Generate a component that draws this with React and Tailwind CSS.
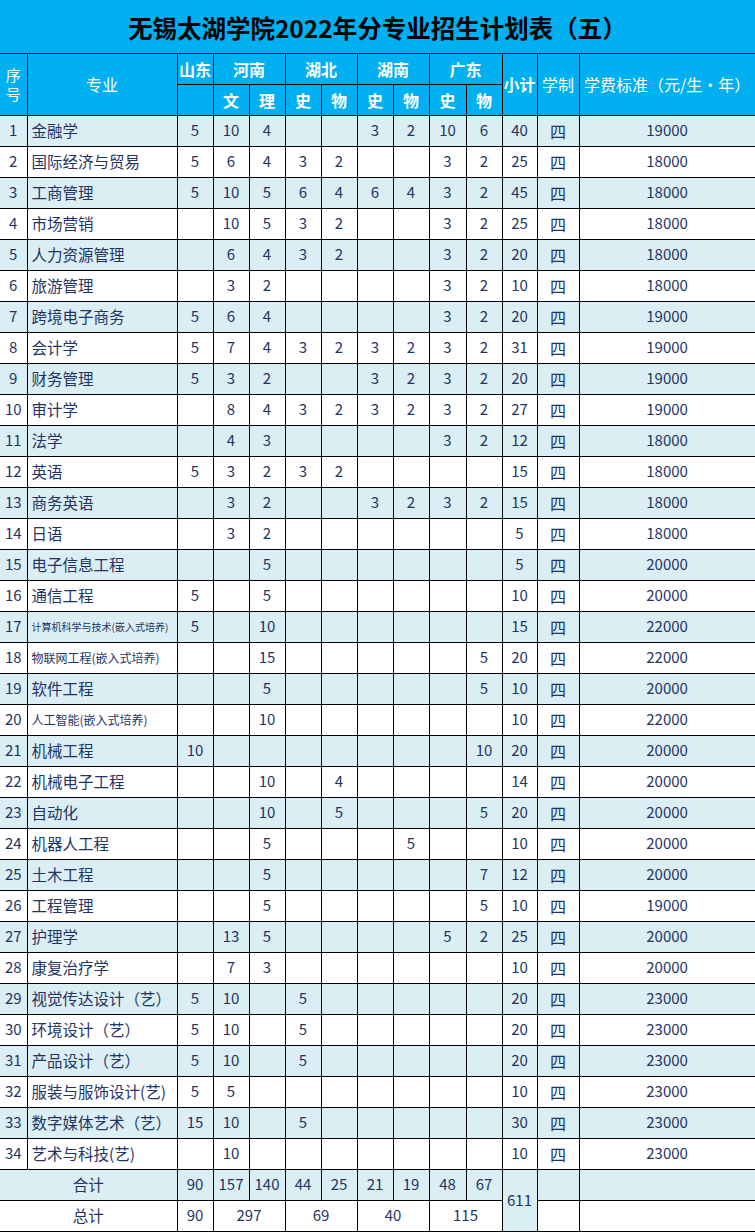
const rows = [
  ['金融学', '5', '10', '4', '', '', '3', '2', '10', '6', '40', '19000'],
  ['国际经济与贸易', '5', '6', '4', '3', '2', '', '', '3', '2', '25', '18000'],
  ['工商管理', '5', '10', '5', '6', '4', '6', '4', '3', '2', '45', '18000'],
  ['市场营销', '', '10', '5', '3', '2', '', '', '3', '2', '25', '18000'],
  ['人力资源管理', '', '6', '4', '3', '2', '', '', '3', '2', '20', '18000'],
  ['旅游管理', '', '3', '2', '', '', '', '', '3', '2', '10', '18000'],
  ['跨境电子商务', '5', '6', '4', '', '', '', '', '3', '2', '20', '19000'],
  ['会计学', '5', '7', '4', '3', '2', '3', '2', '3', '2', '31', '19000'],
  ['财务管理', '5', '3', '2', '', '', '3', '2', '3', '2', '20', '19000'],
  ['审计学', '', '8', '4', '3', '2', '3', '2', '3', '2', '27', '19000'],
  ['法学', '', '4', '3', '', '', '', '', '3', '2', '12', '18000'],
  ['英语', '5', '3', '2', '3', '2', '', '', '', '', '15', '18000'],
  ['商务英语', '', '3', '2', '', '', '3', '2', '3', '2', '15', '18000'],
  ['日语', '', '3', '2', '', '', '', '', '', '', '5', '18000'],
  ['电子信息工程', '', '', '5', '', '', '', '', '', '', '5', '20000'],
  ['通信工程', '5', '', '5', '', '', '', '', '', '', '10', '20000'],
  ['计算机科学与技术(嵌入式培养)', '5', '', '10', '', '', '', '', '', '', '15', '22000', 'xs'],
  ['物联网工程(嵌入式培养)', '', '', '15', '', '', '', '', '', '5', '20', '22000', 'sm'],
  ['软件工程', '', '', '5', '', '', '', '', '', '5', '10', '20000'],
  ['人工智能(嵌入式培养)', '', '', '10', '', '', '', '', '', '', '10', '22000', 'sm'],
  ['机械工程', '10', '', '', '', '', '', '', '', '10', '20', '20000'],
  ['机械电子工程', '', '', '10', '', '4', '', '', '', '', '14', '20000'],
  ['自动化', '', '', '10', '', '5', '', '', '', '5', '20', '20000'],
  ['机器人工程', '', '', '5', '', '', '', '5', '', '', '10', '20000'],
  ['土木工程', '', '', '5', '', '', '', '', '', '7', '12', '20000'],
  ['工程管理', '', '', '5', '', '', '', '', '', '5', '10', '19000'],
  ['护理学', '', '13', '5', '', '', '', '', '5', '2', '25', '20000'],
  ['康复治疗学', '', '7', '3', '', '', '', '', '', '', '10', '20000'],
  ['视觉传达设计（艺）', '5', '10', '', '5', '', '', '', '', '', '20', '23000'],
  ['环境设计（艺）', '5', '10', '', '5', '', '', '', '', '', '20', '23000'],
  ['产品设计（艺）', '5', '10', '', '5', '', '', '', '', '', '20', '23000'],
  ['服装与服饰设计(艺)', '5', '5', '', '', '', '', '', '', '', '10', '23000'],
  ['数字媒体艺术（艺）', '15', '10', '', '5', '', '', '', '', '', '30', '23000'],
  ['艺术与科技(艺)', '', '10', '', '', '', '', '', '', '', '10', '23000'],
];

const widths = ['w-[27px]', 'w-[150px]', 'w-[36px]', 'w-[36px]', 'w-[36px]', 'w-[36px]', 'w-[36px]', 'w-[36px]', 'w-[36px]', 'w-[37px]', 'w-[36px]', 'w-[35px]', 'w-[42px]', 'w-[176px]'];

const cell = 'border border-black p-0 h-[31px] text-center';
const head = 'border border-black p-0 h-[31px] text-center text-white text-[16px]';

export default function App() {
  return (
    <div className="w-[755px] h-[1232px] overflow-hidden bg-white font-['Noto_Sans_CJK_SC',sans-serif] text-[#1f3464]">
      <table className="table-fixed border-collapse w-[755px]">
        <colgroup>
          {widths.map((w, i) => (
            <col key={i} className={w} />
          ))}
        </colgroup>
        <tbody>
          <tr>
            <td colSpan={14} className="h-[53px] p-0 pt-1 bg-[#00b0f0] border-b border-r border-black text-center text-black font-bold text-[24.5px]">
              无锡太湖学院2022年分专业招生计划表（五）
            </td>
          </tr>

          <tr className="bg-[#00b0f0]">
            <td rowSpan={2} className="border border-black border-l-0 p-0 text-center text-white text-[15px]">
              <div className="flex flex-col items-center gap-[2px]">
                <span className="leading-[17px]">序</span>
                <span className="leading-[17px]">号</span>
              </div>
            </td>
            <td rowSpan={2} className={head}>专业</td>
            <td className={head + ' font-bold'}>山东</td>
            <td colSpan={2} className={head + ' font-bold'}>河南</td>
            <td colSpan={2} className={head + ' font-bold'}>湖北</td>
            <td colSpan={2} className={head + ' font-bold'}>湖南</td>
            <td colSpan={2} className={head + ' font-bold'}>广东</td>
            <td rowSpan={2} className={head + ' font-bold'}>小计</td>
            <td rowSpan={2} className={head}>学制</td>
            <td rowSpan={2} className={head + ' whitespace-nowrap'}>学费标准（元/生・年）</td>
          </tr>
          <tr className="bg-[#00b0f0]">
            <td className={head}></td>
            {['文', '理', '史', '物', '史', '物', '史', '物'].map((t, i) => (
              <td key={i} className={head + ' font-bold'}>{t}</td>
            ))}
          </tr>

          {rows.map((r, i) => {
            const size = r[12] === 'xs' ? 'text-[10px]' : r[12] === 'sm' ? 'text-[12px]' : 'text-[15.5px]';
            return (
              <tr key={i} className={i % 2 === 0 ? 'bg-[#daeef3]' : 'bg-white'}>
                <td className={cell + ' border-l-0 text-[15px]'}>{i + 1}</td>
                <td className={cell + ' text-left pl-1 whitespace-nowrap ' + size}>{r[0]}</td>
                {r.slice(1, 11).map((v, j) => (
                  <td key={j} className={cell + ' text-[15px]'}>{v}</td>
                ))}
                <td className={cell + ' text-[16px]'}>四</td>
                <td className={cell + ' text-[15px]'}>{r[11]}</td>
              </tr>
            );
          })}

          <tr className="bg-[#daeef3]">
            <td colSpan={2} className={cell + ' border-l-0 text-[15.5px]'}>合计</td>
            {['90', '157', '140', '44', '25', '21', '19', '48', '67'].map((v, i) => (
              <td key={i} className={cell + ' text-[15px]'}>{v}</td>
            ))}
            <td rowSpan={2} className={cell + ' text-[15px]'}>611</td>
            <td className={cell}></td>
            <td className={cell}></td>
          </tr>
          <tr className="bg-white">
            <td colSpan={2} className={cell + ' border-l-0 text-[15.5px]'}>总计</td>
            <td className={cell + ' text-[15px]'}>90</td>
            <td colSpan={2} className={cell + ' text-[15px]'}>297</td>
            <td colSpan={2} className={cell + ' text-[15px]'}>69</td>
            <td colSpan={2} className={cell + ' text-[15px]'}>40</td>
            <td colSpan={2} className={cell + ' text-[15px]'}>115</td>
            <td className={cell}></td>
            <td className={cell}></td>
          </tr>
        </tbody>
      </table>
    </div>
  );
}
